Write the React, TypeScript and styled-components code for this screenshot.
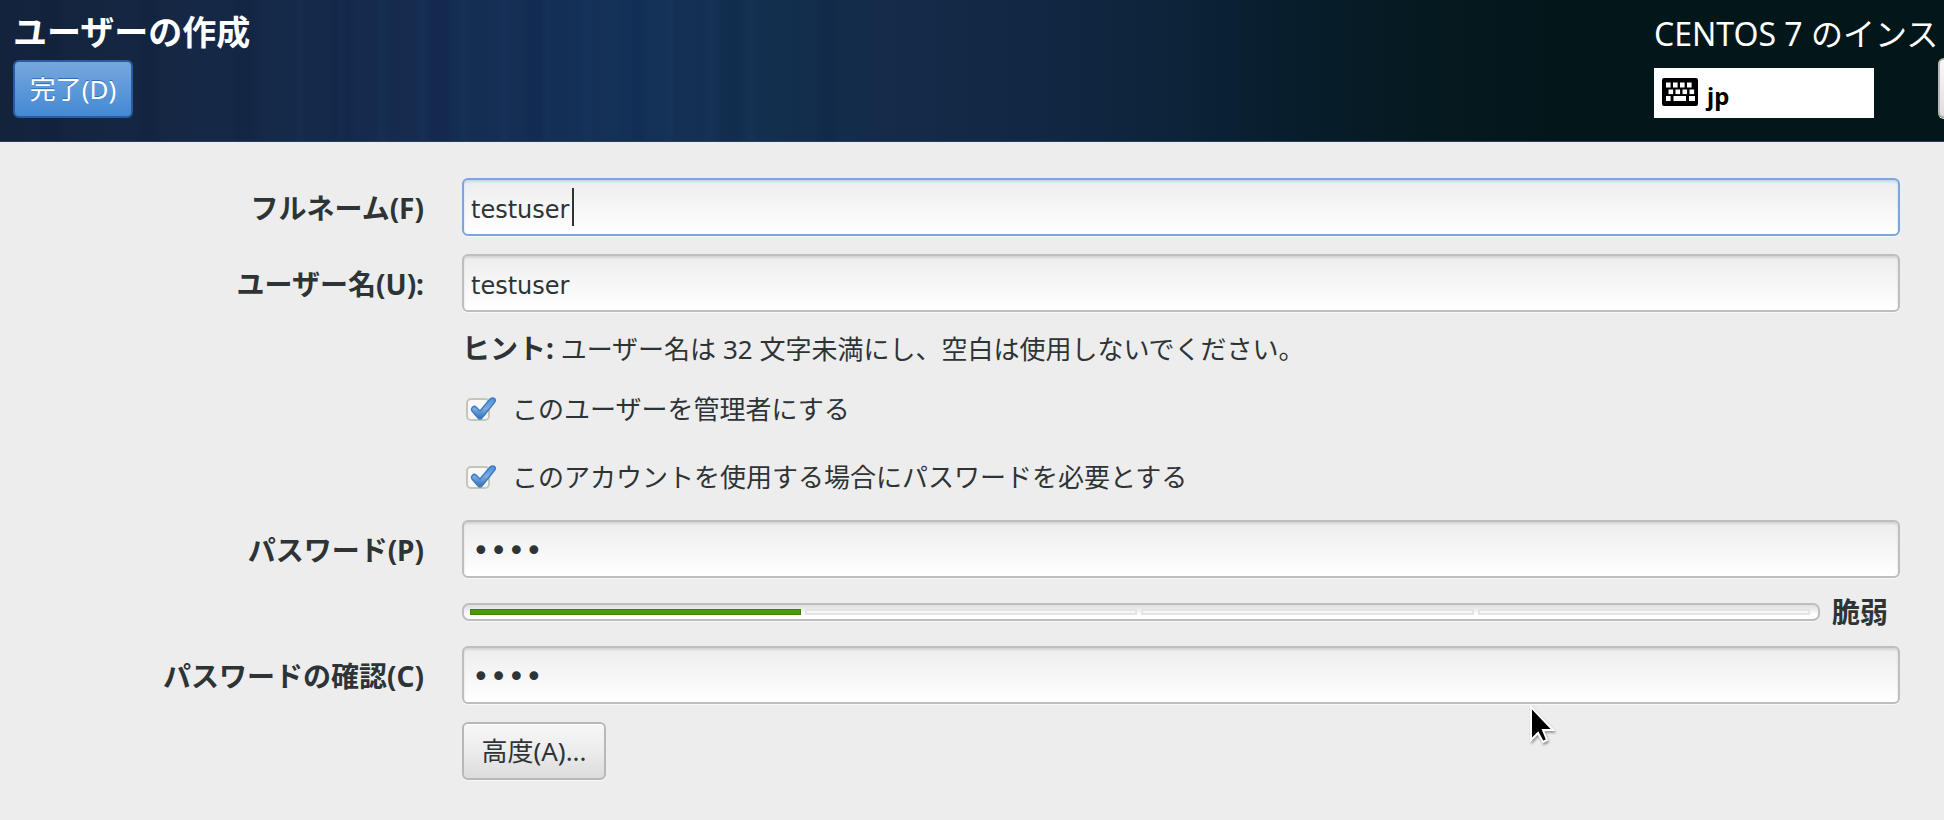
import React, { useState } from "react";
import styled, { createGlobalStyle, css } from "styled-components";

const GlobalStyle = createGlobalStyle`
  *, *::before, *::after { box-sizing: border-box; }
  body {
    margin: 0;
    background: #ededed;
    color: #2e3436;
    font-family: "Noto Sans", "Noto Sans CJK JP", sans-serif;
    font-size: 26px;
    line-height: 36px;
    overflow-x: hidden;
  }
`;

const Page = styled.div`
  min-height: 100vh;
`;

const Header = styled.header`
  display: flex;
  justify-content: space-between;
  height: 142px;
  padding: 12px 0 0 13px;
  overflow: hidden;
  color: #fff;
  border-bottom: 1px solid #2a3d57;
  background:
    repeating-linear-gradient(90deg, transparent 0 14px, rgba(60, 110, 180, 0.04) 18px 22px, transparent 26px 41px) 280px 0 / 480px 100% no-repeat,
    repeating-linear-gradient(90deg, transparent 0 37px, rgba(0, 16, 50, 0.1) 44px 58px, transparent 66px 97px) 0 0 / 900px 100% no-repeat,
    linear-gradient(90deg, #14233c 0, #152947 13%, #152c50 22%, #143158 32%, #132f4e 40%, #142a48 47%, #102742 55%, #0b2236 62%, #071d2b 67%, #05191f 74%, #031619 81%, #031619 100%);
`;

const HeaderLeft = styled.div`
  display: flex;
  flex-direction: column;
  align-items: flex-start;
  gap: 8px;
`;

const Title = styled.h1`
  margin: 0;
  font-size: 34px;
  line-height: 40px;
  font-weight: 700;
`;

const HeaderRight = styled.div`
  width: 290px;
  flex: none;
  padding-top: 4px;
`;

const Product = styled.div`
  font-size: 32px;
  white-space: nowrap;
`;

const HeaderTools = styled.div`
  display: flex;
  align-items: flex-end;
  gap: 64px;
  height: 66px;
`;

const Layout = styled.div`
  display: flex;
  align-items: flex-start;
  flex: none;
  gap: 9px;
  width: 220px;
  height: 50px;
  padding: 10px 8px 0;
  color: #000;
  background: #fff;
  font-size: 24px;
  font-weight: 700;
`;

const Button = styled.button<{ $primary?: boolean }>`
  min-width: 144px;
  height: 58px;
  padding: 0 14px;
  border: 2px solid #b6b9b7;
  border-radius: 6px;
  color: #2e3436;
  background: linear-gradient(#f7f7f7, #ececec 50%, #dcdcdc);
  box-shadow: inset 0 1px #fff, 0 1px #f8f8f8;
  font: inherit;
  flex: none;
  ${(p) =>
    p.$primary &&
    css`
      min-width: 120px;
      color: #fff;
      border-color: #2a5a9f;
      background: linear-gradient(#76a7de, #4389d4);
      box-shadow: none;
      text-shadow: 0 -1px #2f6db8;
    `}
`;

const HelpButton = styled(Button)`
  height: 60px;
`;

const Form = styled.form`
  display: grid;
  grid-template-columns: 424px minmax(0, 1fr);
  gap: 18px 38px;
  align-items: center;
  padding: 36px 44px 40px 0;
`;

const Label = styled.label`
  padding-top: 2px;
  text-align: right;
  font-size: 28px;
  font-weight: 700;
  white-space: nowrap;
`;

const Strong = styled.strong`
  font-size: 28px;
`;

const Field = styled.div`
  display: flex;
  flex-direction: column;
  align-items: stretch;
  gap: 18px;
  grid-column: 2;
`;

const Actions = styled.div`
  grid-column: 2;
`;

const Hint = styled.div`
  height: 36px;
  white-space: nowrap;
`;

const Entry = styled.input<{ $focused?: boolean }>`
  display: block;
  width: 100%;
  height: 58px;
  padding: 6px 7px 0;
  border: 2px solid ${(p) => (p.$focused ? "#7ba6da" : "#bcbfbd")};
  border-radius: 6px;
  outline: none;
  color: #2e3436;
  background: linear-gradient(#ededed, #fff);
  box-shadow: inset 0 2px 2px ${(p) => (p.$focused ? "#c6d8ef" : "#d4d6d5")}, 0 1px #f8f8f8;
  font-family: "DejaVu Sans", sans-serif;
  font-size: 24px;
`;

const EntryWrap = styled.div`
  position: relative;
`;

const Caret = styled.span`
  position: absolute;
  top: 10px;
  left: 110px;
  width: 2px;
  height: 38px;
  background: #2e3436;
`;

const Secret = styled(Entry)`
  padding: 2px 8px 0;
  font-size: 30px;
`;

const CheckRow = styled.label`
  display: flex;
  align-items: center;
  gap: 16px;
  height: 50px;
`;

const CheckBox = styled.span`
  position: relative;
  display: block;
  width: 34px;
  height: 32px;
  input {
    position: absolute;
    inset: 0;
    width: 100%;
    height: 100%;
    margin: 0;
    opacity: 0;
  }
  svg { display: block; }
`;

const MeterRow = styled.div`
  display: flex;
  align-items: center;
  gap: 12px;
  height: 32px;
`;

const Meter = styled.div`
  display: flex;
  flex: 1;
  gap: 4px;
  height: 18px;
  padding: 4px 8px 4px 6px;
  border: 2px solid #bcbfbd;
  border-radius: 7px;
  background: linear-gradient(#dedede, #fff 70%);
  box-shadow: 0 1px #f8f8f8;
`;

const Segment = styled.span<{ $on?: boolean }>`
  flex: 1;
  border: ${(p) => (p.$on ? "1px solid #3f8205" : "2px solid #e4e4e4")};
  background: ${(p) => (p.$on ? "#4e9a06" : "#f6f6f6")};
`;

const Strength = styled.strong`
  width: 68px;
  font-size: 28px;
`;

const Pointer = styled.svg`
  position: absolute;
  top: 704px;
  left: 1528px;
  filter: drop-shadow(1px 2px 1px rgba(0, 0, 0, 0.35));
`;

function KeyboardIcon() {
  const columns = [0, 1, 2, 3];
  return (
    <svg width="36" height="28" viewBox="0 0 36 28" aria-hidden="true">
      <rect width="36" height="28" rx="2" fill="#000" />
      <g fill="#fff">
        {columns.map((i) => (
          <rect key={`top${i}`} x={4 + i * 7} y="4.5" width="4.6" height="5" />
        ))}
        {columns.map((i) => (
          <rect key={`mid${i}`} x={6.5 + i * 7} y="11.5" width="4.6" height="4.6" />
        ))}
        <rect x="4" y="18" width="4.6" height="5" />
        <rect x="11.5" y="18" width="12.5" height="5" />
        <rect x="27" y="18" width="6" height="5" />
      </g>
    </svg>
  );
}

function CheckOption({ label }: { label: string }) {
  const [on, setOn] = useState(true);
  return (
    <CheckRow>
      <CheckBox>
        <input type="checkbox" checked={on} onChange={() => setOn(!on)} />
        <svg width="34" height="32" viewBox="0 0 34 32" aria-hidden="true">
          <defs>
            <linearGradient id="tick" x1="0" y1="0" x2="0" y2="1">
              <stop offset="0" stopColor="#4a90d9" />
              <stop offset="0.5" stopColor="#7fabdf" />
              <stop offset="1" stopColor="#2f6fb8" />
            </linearGradient>
          </defs>
          <rect x="5" y="6" width="22" height="21" rx="4" fill="#f8f8f8" stroke="#c3c7b9" strokeWidth="2" />
          {on && (
            <path
              d="M10 15 Q12 12 14 14 L18 18 L28 6 Q31 4 33 6 Q34 8 32 10 L20 25 Q18 27 16 25 L10 18 Q9 16 10 15 Z"
              fill="url(#tick)"
              stroke="#3b7cc4"
              strokeWidth="1.4"
              strokeLinejoin="round"
            />
          )}
        </svg>
      </CheckBox>
      {label}
    </CheckRow>
  );
}

export default function App() {
  const [full, setFull] = useState("testuser");
  const [user, setUser] = useState("testuser");
  const [pass, setPass] = useState("test");
  const [confirm, setConfirm] = useState("test");
  return (
    <Page>
      <GlobalStyle />
      <Header>
        <HeaderLeft>
          <Title>ユーザーの作成</Title>
          <Button type="button" $primary>完了(D)</Button>
        </HeaderLeft>
        <HeaderRight>
          <Product>CENTOS 7 のインス</Product>
          <HeaderTools>
            <Layout>
              <KeyboardIcon />
              jp
            </Layout>
            <HelpButton type="button" />
          </HeaderTools>
        </HeaderRight>
      </Header>
      <Form onSubmit={(e) => e.preventDefault()}>
        <Label htmlFor="full">フルネーム(F)</Label>
        <EntryWrap>
          <Entry id="full" $focused value={full} onChange={(e) => setFull(e.target.value)} />
          <Caret />
        </EntryWrap>
        <Label htmlFor="user">ユーザー名(U):</Label>
        <Entry id="user" value={user} onChange={(e) => setUser(e.target.value)} />
        <Field>
          <Hint>
            <Strong>ヒント:</Strong> ユーザー名は 32 文字未満にし、空白は使用しないでください。
          </Hint>
          <CheckOption label="このユーザーを管理者にする" />
          <CheckOption label="このアカウントを使用する場合にパスワードを必要とする" />
        </Field>
        <Label htmlFor="pass">パスワード(P)</Label>
        <Secret id="pass" type="password" value={pass} onChange={(e) => setPass(e.target.value)} />
        <Field>
          <MeterRow>
            <Meter>
              <Segment $on />
              <Segment />
              <Segment />
              <Segment />
            </Meter>
            <Strength>脆弱</Strength>
          </MeterRow>
        </Field>
        <Label htmlFor="confirm">パスワードの確認(C)</Label>
        <Secret id="confirm" type="password" value={confirm} onChange={(e) => setConfirm(e.target.value)} />
        <Actions>
          <Button type="button">高度(A)...</Button>
        </Actions>
      </Form>
      <Pointer width="30" height="42" viewBox="0 0 30 42" aria-hidden="true">
        <path d="M3 3 V36 L10 29 L15 38 L19 36 L15 26 H25 Z" fill="#000" stroke="#fff" strokeWidth="2" />
      </Pointer>
    </Page>
  );
}
